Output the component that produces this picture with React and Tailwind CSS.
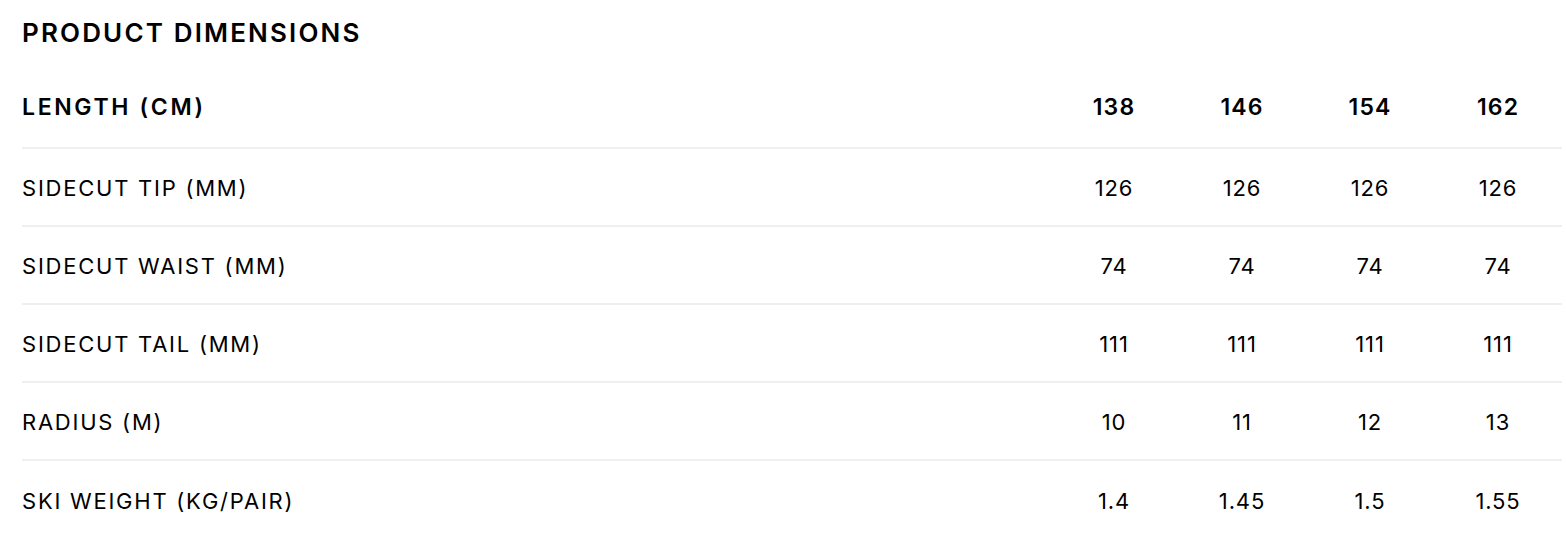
import React from 'react'

const sizes = ['138', '146', '154', '162']

const rows = [
  { label: 'SIDECUT TIP (MM)', values: ['126', '126', '126', '126'] },
  { label: 'SIDECUT WAIST (MM)', values: ['74', '74', '74', '74'] },
  { label: 'SIDECUT TAIL (MM)', values: ['111', '111', '111', '111'] },
  { label: 'RADIUS (M)', values: ['10', '11', '12', '13'] },
  { label: 'SKI WEIGHT (KG/PAIR)', values: ['1.4', '1.45', '1.5', '1.55'] },
]

const App = () => {
  return (
    <div className="w-[1566px] h-[540px] bg-white text-black pl-[22px] pr-[4px] font-['Inter','Noto_Sans',sans-serif]">
      <h2 className="h-[66px] pt-[17px] text-[26px] leading-[32px] font-semibold tracking-[0.083em]">
        PRODUCT DIMENSIONS
      </h2>

      <div className="w-full">
        <div className="flex items-center h-[83px] pt-[2px] border-b-2 border-[#efefef] text-[23px] font-semibold">
          <div className="flex-1 tracking-[0.115em]">LENGTH (CM)</div>
          {sizes.map((s) => (
            <div key={s} className="w-[128px] text-center tracking-[0.05em]">{s}</div>
          ))}
        </div>

        {rows.map((r) => (
          <div key={r.label} className="flex items-center h-[78px] pt-[2px] border-b-2 border-[#efefef] last:border-b-0 text-[22px]">
            <div className="flex-1 tracking-[0.08em]">{r.label}</div>
            {r.values.map((v, i) => (
              <div key={i} className="w-[128px] text-center tracking-[0.04em]">{v}</div>
            ))}
          </div>
        ))}
      </div>
    </div>
  )
}

export default App
